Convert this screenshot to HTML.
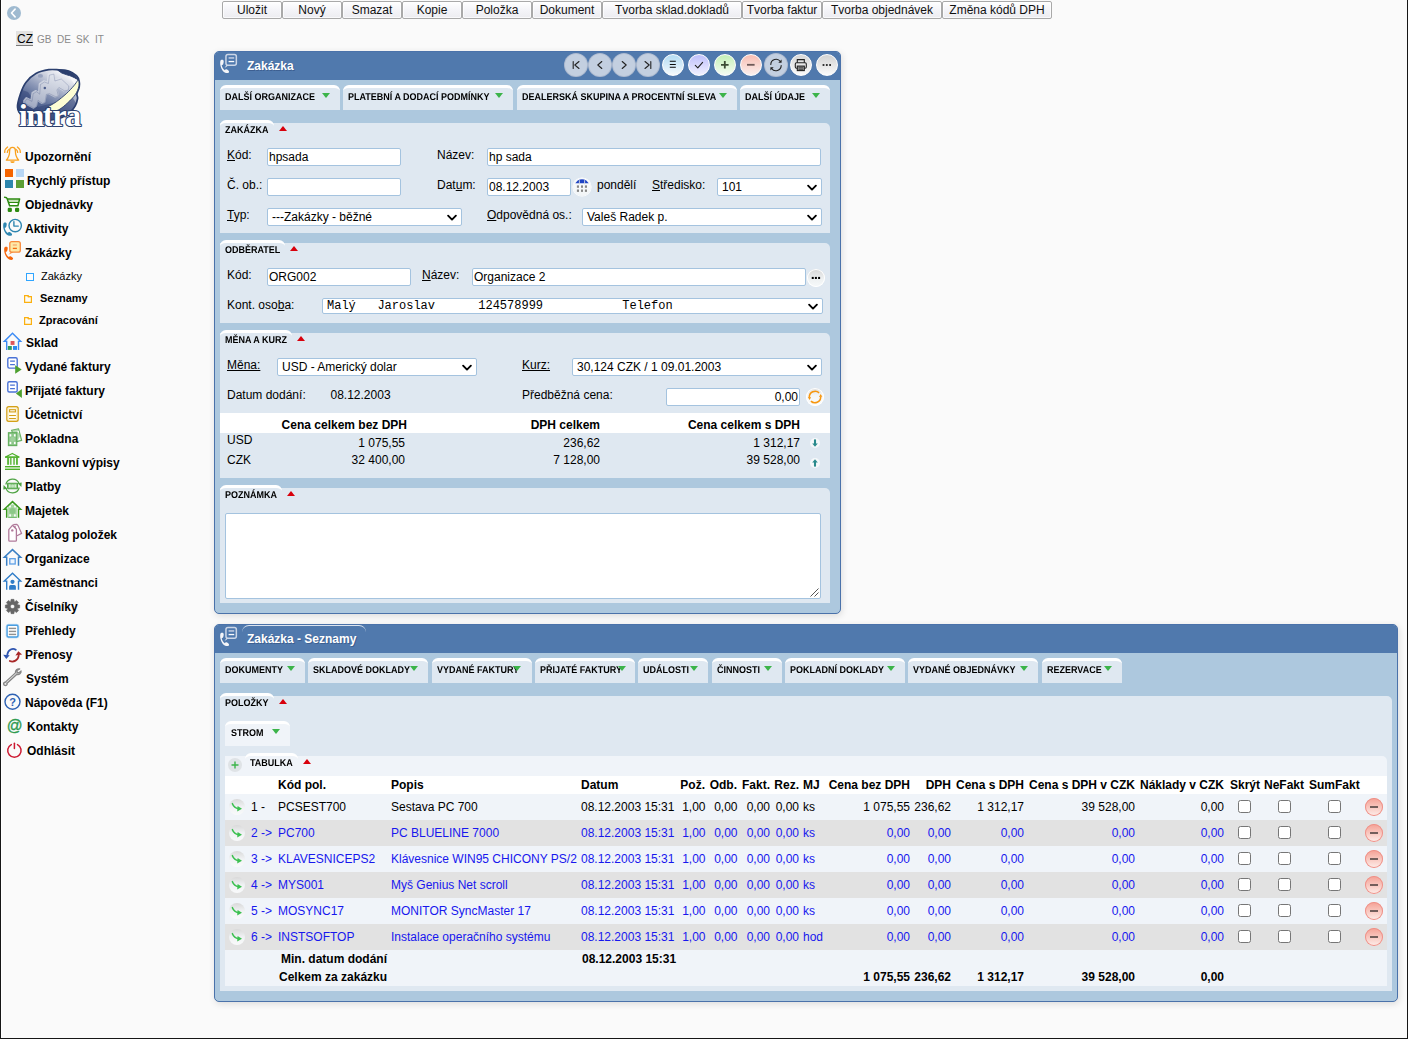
<!DOCTYPE html>
<html><head><meta charset="utf-8"><title>Zakázka</title><style>
*{box-sizing:border-box}
svg{display:block}
html,body{margin:0;padding:0}
body{width:1408px;height:1039px;overflow:hidden;position:relative;background:#fafafa;font:12px "Liberation Sans",sans-serif;color:#000}
.abs{position:absolute}
.t{position:absolute;white-space:pre;line-height:14px;height:14px}
.b{font-weight:bold}
.r{text-align:right}
.u{text-decoration:underline}
.edge{position:absolute;background:#161616}
.tb{position:absolute;top:1px;height:18px;border:1px solid #a9a9a9;border-radius:2px;background:linear-gradient(#ffffff,#f4f4f8 50%,#ececf0);text-align:center;line-height:17px;font-size:12px;color:#111;box-shadow:inset 0 0 0 1px rgba(255,255,255,.7)}
.win{position:absolute;border:1px solid #4a72aa;border-radius:5px;background:#adc8de;box-shadow:1px 2px 7px rgba(0,0,0,.12)}
.hdr{position:absolute;left:0;top:0;right:0;height:28px;background:#5079ad;border-radius:4px 4px 0 0}
.ttl{position:absolute;color:#fff;font-weight:bold;font-size:12px;line-height:14px;white-space:pre;text-shadow:1px 1px 0 #3d5f91}
.tab{position:absolute;height:25px;background:#dfe8f1;border-radius:6px 6px 0 0;border-top:3px solid #fff;font:bold 9.800px "Liberation Sans",sans-serif;white-space:pre;color:#000}
.tab span{position:absolute;top:5px;line-height:10px;text-rendering:geometricPrecision;transform:scaleX(.918);transform-origin:0 100%}
.tab i{position:absolute;top:5px;width:0;height:0;border-left:4px solid transparent;border-right:4px solid transparent;border-top:5px solid #3cb44a}
.sec{position:absolute;background:#dfe8f1;border-radius:0 5px 0 0}
.sec2{background:#f0f4f9}
.lab{position:absolute;background:inherit;border-radius:6px 6px 0 0;border-top:3px solid #fff;height:14px;font:bold 9.800px "Liberation Sans",sans-serif;white-space:pre}
.lab span{position:absolute;left:5px;top:3px;line-height:10px;text-rendering:geometricPrecision;transform:scaleX(.918);transform-origin:0 100%}
.lab i{position:absolute;top:3px;width:0;height:0;border-left:4px solid transparent;border-right:4px solid transparent;border-bottom:5px solid #d8000c}
.inp{position:absolute;background:#fff;border:1px solid #a4c3df;border-radius:2px;font-size:12px;line-height:16px;padding:0 0 0 1px;white-space:pre;overflow:hidden}
.sel{position:absolute;background:#fff;border:1px solid #a4c3df;border-radius:2px;font-size:12px;line-height:16px;padding:0 0 0 4px;white-space:pre;overflow:hidden}
.sel svg{position:absolute;right:3px;top:5px}
.sel.mono svg{top:4px}
.mono{font-family:"Liberation Mono",monospace}
.cb{position:absolute;width:13px;height:13px;border:1px solid #767676;border-radius:2.500px;background:#fff}
.nav{position:absolute;font-weight:bold;font-size:12px;white-space:pre;line-height:14px;height:14px}
.sub{position:absolute;font-size:11px;white-space:pre;line-height:13px;height:13px}
.blue{color:#1717ee}
</style></head><body>
<div class="edge" style="left:0;top:0;width:1px;height:1039px"></div><div class="abs" style="left:1px;top:0;width:1.300px;height:1038px;background:#fff"></div>
<div class="edge" style="left:1407px;top:0;width:1px;height:1039px"></div>
<div class="edge" style="left:0;top:1038px;width:1408px;height:1px"></div>
<div class="abs" style="left:7px;top:6px;width:14px;height:14px;border-radius:50%;background:#9fbad0"><svg width="14" height="14" viewBox="0.500 0.500 14 14"><path d="M8.6 3.6 L5 7.5 L8.6 11.4" fill="none" stroke="#fff" stroke-width="1.6" stroke-linecap="round" stroke-linejoin="round"/></svg></div>
<div class="abs" style="left:16px;top:31px;width:17px;height:15px;background:#e2e2e2;border-bottom:1px solid #7a7a7a"></div>
<div class="t" style="left:17px;top:32px;font-size:12px">CZ</div>
<div class="t" style="left:37px;top:32px;font-size:10px;color:#8a8a8a;line-height:15px">GB</div>
<div class="t" style="left:57px;top:32px;font-size:10px;color:#8a8a8a;line-height:15px">DE</div>
<div class="t" style="left:76px;top:32px;font-size:10px;color:#8a8a8a;line-height:15px">SK</div>
<div class="t" style="left:95px;top:32px;font-size:10px;color:#8a8a8a;line-height:15px">IT</div>
<div class="abs" style="left:8px;top:60px"><svg width="88" height="72" viewBox="0 0 88 72">
<defs>
<linearGradient id="gl" x1="0.75" y1="0.1" x2="0.2" y2="0.95"><stop offset="0" stop-color="#f0f1f6"/><stop offset="0.18" stop-color="#c9cedc"/><stop offset="0.42" stop-color="#8d99b8"/><stop offset="0.68" stop-color="#566894"/><stop offset="1" stop-color="#2f4275"/></linearGradient>
<linearGradient id="sq" x1="0.7" y1="0" x2="0.3" y2="1"><stop offset="0" stop-color="#e3e6ee"/><stop offset="0.5" stop-color="#c3c9d8"/><stop offset="1" stop-color="#a3acc4"/></linearGradient>
<filter id="bl" x="-5%" y="-5%" width="110%" height="110%"><feGaussianBlur stdDeviation=".55"/></filter>
<clipPath id="gc"><path d="M9.5 47.3C9.2 43.7 11.1 37.9 12.5 33.8C13.9 29.6 15.3 25.8 17.9 22.4C20.5 19.0 24.1 15.6 27.9 13.5C31.7 11.4 36.9 10.3 40.8 9.7C44.6 9.1 47.7 9.7 51.0 9.9C54.3 10.1 57.8 10.0 60.7 11.0C63.7 12.0 67.0 14.2 68.7 15.9C70.5 17.6 70.8 19.6 71.2 21.5C71.6 23.4 71.6 24.9 71.2 27.0C70.8 29.1 69.2 31.9 68.9 33.8C68.6 35.7 69.9 36.5 69.6 38.5C69.3 40.5 68.4 43.5 67.2 45.8C66.0 48.0 64.4 50.0 62.2 52.0C60.0 54.0 57.7 56.1 54.0 57.5C50.3 58.9 44.8 60.2 40.0 60.5C35.2 60.8 29.3 60.3 25.0 59.5C20.7 58.7 16.6 57.5 14.0 55.5C11.4 53.5 9.8 50.9 9.5 47.3Z"/></clipPath></defs>
<path d="M9.5 47.3C9.2 43.7 11.1 37.9 12.5 33.8C13.9 29.6 15.3 25.8 17.9 22.4C20.5 19.0 24.1 15.6 27.9 13.5C31.7 11.4 36.9 10.3 40.8 9.7C44.6 9.1 47.7 9.7 51.0 9.9C54.3 10.1 57.8 10.0 60.7 11.0C63.7 12.0 67.0 14.2 68.7 15.9C70.5 17.6 70.8 19.6 71.2 21.5C71.6 23.4 71.6 24.9 71.2 27.0C70.8 29.1 69.2 31.9 68.9 33.8C68.6 35.7 69.9 36.5 69.6 38.5C69.3 40.5 68.4 43.5 67.2 45.8C66.0 48.0 64.4 50.0 62.2 52.0C60.0 54.0 57.7 56.1 54.0 57.5C50.3 58.9 44.8 60.2 40.0 60.5C35.2 60.8 29.3 60.3 25.0 59.5C20.7 58.7 16.6 57.5 14.0 55.5C11.4 53.5 9.8 50.9 9.5 47.3Z" fill="url(#gl)" stroke="#2b3f6e" stroke-width="1.700" stroke-linejoin="round"/>
<g clip-path="url(#gc)">
<path d="M8 36L14 30L20 32L30 47L52 41L62 33L72 50L60 62L8 62Z" fill="#2f4275" opacity=".5"/>
<path d="M9 30C10 42 12 50 18 57L8 58Z" fill="#2b3f6e" opacity=".7"/>
<ellipse cx="32.400" cy="15.900" rx="2.600" ry="1.900" fill="#97a2be"/>
<path d="M16.4 40.8L18.4 38.3L23.4 40.8L24.6 33.1L27.9 31.1L31.1 33.6L31.9 23.9L35.8 21.4L39.8 22.9L40.8 14.5L45.3 13.5L46.3 20.4L52.7 18.4L60.2 25.4L59.7 29.4L56.2 30.4L50.3 26.9L48.3 29.4L49.8 35.3L47.3 36.3L40.8 33.1L37.8 33.8L36.3 41.8L33.8 42.8L29.4 39.8L27.9 45.8L25.4 47.5L16.4 42.8Z" fill="url(#sq)" stroke="url(#sq)" stroke-width="2.400" stroke-linejoin="round" filter="url(#bl)"/>
<path d="M16.4 40.8L18.4 38.3L23.4 40.8L24.6 33.1L27.9 31.1L31.1 33.6L31.9 23.9L35.8 21.4L39.8 22.9L40.8 14.5L45.3 13.5L46.3 20.4L52.7 18.4L60.2 25.4L59.7 29.4L56.2 30.4L50.3 26.9L48.3 29.4L49.8 35.3L47.3 36.3L40.8 33.1L37.8 33.8L36.3 41.8L33.8 42.8L29.4 39.8L27.9 45.8L25.4 47.5L16.4 42.8Z" fill="none" stroke="#3e5080" stroke-width=".45" stroke-linejoin="round" opacity=".55" transform="translate(.6,.6)"/>
<circle cx="36.800" cy="28.100" r="1.250" fill="#4c5d8a"/>
</g>
<path d="M49.800 10.200C54 8.800 66 10.500 70.800 20.600L69.900 20.200C66.500 16.800 61 15.800 53.700 13Z" fill="#2b3f6e" stroke="#2b3f6e" stroke-width=".9" stroke-linejoin="round"/>
<path d="M60.500 15.700L69.300 20L66.300 24Z" fill="#f7f7fa"/>
<path d="M69.9 20.2C69.2 21.1 67.7 23.6 65.7 25.9C63.8 28.2 61.1 31.1 58.2 33.8C55.3 36.4 51.8 39.3 48.3 41.8C44.8 44.2 39.0 47.4 37.1 48.5L41 49.300L41.8 52.2C43.3 51.8 47.8 51.4 50.8 49.8C53.8 48.2 57.0 45.3 59.7 42.8C62.4 40.3 65.4 37.4 67.2 34.8C69.0 32.1 70.1 29.2 70.7 26.9C71.3 24.6 70.9 21.9 70.9 20.9Z" fill="#fdfdd4" stroke="#2b3f6e" stroke-width=".9" stroke-linejoin="round"/>
<text x="10.800" y="66.200" font-family="Liberation Serif" font-weight="bold" font-size="32.500" textLength="62.500" lengthAdjust="spacing" fill="#ffffff" stroke="#2b3f6e" stroke-width="2.200" paint-order="stroke" stroke-linejoin="round">intra</text>
</svg></div>
<div class="nav" style="left:25px;top:150px">Upozornění</div>
<div class="abs" style="left:0;top:144px;width:26px;height:24px"><svg width="26" height="24" viewBox="0 0 26 24" ><g fill="none" stroke="#f9a01b" stroke-width="1.300" stroke-linecap="round" stroke-linejoin="round"><path d="M12.500 3.400C10.600 3.400 9.600 5 9.600 7.200C9.600 11.200 8.600 13.600 6.300 16.100H18.700C16.400 13.600 15.400 11.200 15.400 7.200C15.400 5 14.400 3.400 12.500 3.400Z"/><path d="M7.600 3C5.600 4.300 4.700 6.200 4.700 8.400M9.200 5.300C7.900 6.100 7.400 7.200 7.300 8.400M17.400 3C19.400 4.300 20.300 6.200 20.300 8.400M15.800 5.300C17.100 6.100 17.600 7.200 17.700 8.400"/></g><path d="M10.300 17.200h4.400a2.200 1.900 0 0 1-4.400 0z" fill="#f9a01b"/></svg></div>
<div class="nav" style="left:27px;top:174px">Rychlý přístup</div>
<div class="abs" style="left:0;top:168px;width:26px;height:24px"><svg width="26" height="24" viewBox="0 0 26 24" ><rect x="5" y="1" width="8" height="8" fill="#f56400"/><rect x="16" y="1" width="8" height="8" fill="#b8d6f4"/><rect x="5" y="12" width="8" height="8" fill="#2d86ad"/><rect x="16" y="12" width="8" height="8" fill="#5c9e35"/></svg></div>
<div class="nav" style="left:25px;top:198px">Objednávky</div>
<div class="abs" style="left:0;top:192px;width:26px;height:24px"><svg width="26" height="24" viewBox="0 0 26 24" ><path d="M7.800 7h11.600l-1.600 6.600h-8z" fill="#fff"/><path d="M8.200 7.600h10.800l-.7 2.700h-9.300z" fill="#c5e0b8"/><g fill="none" stroke="#2c8a10" stroke-width="1.500" stroke-linejoin="round" stroke-linecap="round"><path d="M4.600 5.200c1.400 0 2.200.3 2.500 1.300l2.500 7.300h8.300l1.700-6.800h-12"/><path d="M8.500 10.500h10" stroke-width="1.200"/></g><rect x="7.700" y="15.800" width="4.200" height="4.200" rx="1.300" fill="#2c8a10"/><rect x="15" y="15.800" width="4.200" height="4.200" rx="1.300" fill="#2c8a10"/></svg></div>
<div class="nav" style="left:25px;top:222px">Aktivity</div>
<div class="abs" style="left:0;top:216px;width:26px;height:24px"><svg width="26" height="24" viewBox="0 0 26 24" ><g fill="none" stroke="#2e86b0" stroke-width="1.400" stroke-linecap="round" stroke-linejoin="round"><circle cx="15.200" cy="9.600" r="6.200"/><path d="M13.900 5.600V10.100H18.300"/></g><g transform="translate(-1,-0.3)" fill="#2e86b0" stroke="none"><path d="M4.3 8.2 C4.6 6.9 6.2 6.500 7.300 7.200 C8 7.700 7.700 9.200 7.300 10.800 C7.100 11.700 6.300 12.100 5.700 12 C5.900 14.200 7.300 16.200 8.800 17.200 C9.300 16.300 10.200 16.100 11 16.600 C12.300 17.400 13.400 18.200 13 19.200 C12.400 20.300 10.600 20.300 9.200 19.700 C5.800 18.100 3.600 12.500 4.300 8.200Z"/></g></svg></div>
<div class="nav" style="left:25px;top:246px">Zakázky</div>
<div class="abs" style="left:0;top:240px;width:26px;height:24px"><svg width="26" height="24" viewBox="0 0 26 24" ><path d="M11.500 11.500L8.400 14.800L13.500 12.200Z" fill="#f8893a"/><rect x="9.800" y="1.600" width="10.500" height="10.600" rx="2" fill="#fdeaa8" stroke="#f8893a" stroke-width="1.300"/><path d="M12.800 5h4.100" stroke="#f8a870" stroke-width="1.300"/><path d="M12.800 8.400h4.100" stroke="#f56a10" stroke-width="1.300"/><g transform="translate(0,-0.2)" fill="#f5640a" stroke="none"><path d="M4.3 8.2 C4.6 6.9 6.2 6.500 7.300 7.200 C8 7.700 7.700 9.200 7.300 10.800 C7.100 11.700 6.300 12.100 5.700 12 C5.900 14.200 7.300 16.200 8.800 17.200 C9.300 16.300 10.200 16.100 11 16.600 C12.300 17.400 13.400 18.200 13 19.200 C12.400 20.300 10.600 20.300 9.200 19.700 C5.800 18.100 3.600 12.500 4.300 8.200Z"/></g></svg></div>
<div class="nav" style="left:26px;top:336px">Sklad</div>
<div class="abs" style="left:0;top:330px;width:26px;height:24px"><svg width="26" height="24" viewBox="0 0 26 24" ><g fill="none" stroke="#3d8cf5" stroke-width="1.4" stroke-linejoin="miter"><path d="M6.700 19.9 V11.4 H4.300 L12.500 3.3 L20.700 11.4 H18.500 V19.9"/></g><rect x="10.600" y="11" width="3.900" height="3.900" fill="#e0555a"/><rect x="7.900" y="16" width="3.900" height="3.900" fill="#2e9a62"/><rect x="13" y="16" width="4" height="3.900" fill="#2d8cf0"/></svg></div>
<div class="nav" style="left:25px;top:360px">Vydané faktury</div>
<div class="abs" style="left:0;top:354px;width:26px;height:24px"><svg width="26" height="24" viewBox="0 0 26 24" ><rect x="7.800" y="3.8" width="9.400" height="10.300" rx="1.500" fill="#fff" stroke="#4a72d6" stroke-width="1.400"/><path d="M10.100 7.2h4.800M10.100 10.6h4.800" stroke="#4a72d6" stroke-width="1.200"/><path d="M15.200 11.300V19.700L21.700 15.500Z" fill="#4da02f"/></svg></div>
<div class="nav" style="left:25px;top:384px">Přijaté faktury</div>
<div class="abs" style="left:0;top:378px;width:26px;height:24px"><svg width="26" height="24" viewBox="0 0 26 24" ><rect x="7.800" y="3.7" width="9.400" height="10.300" rx="1.500" fill="#fff" stroke="#4a72d6" stroke-width="1.400"/><path d="M10.100 7.1h4.800M10.100 10.6h4.800" stroke="#4a72d6" stroke-width="1.200"/><path d="M21.900 11V19.900L15.900 15.600Z" fill="#4da02f"/></svg></div>
<div class="nav" style="left:25px;top:408px">Účetnictví</div>
<div class="abs" style="left:0;top:402px;width:26px;height:24px"><svg width="26" height="24" viewBox="0 0 26 24" ><rect x="6.900" y="4.700" width="11.200" height="14.600" rx="1.800" fill="#fffdf4" stroke="#d4a017" stroke-width="1.400"/><rect x="8" y="5.800" width="9" height="12.400" rx=".8" fill="none" stroke="#f4e2ac" stroke-width=".9"/><rect x="9.600" y="7.700" width="5.800" height="2.200" fill="#fff" stroke="#d4a017" stroke-width="1.100"/><path d="M9.100 13.500h6.800M9.100 16.500h6.800" stroke="#d4a017" stroke-width="1.200"/></svg></div>
<div class="nav" style="left:25px;top:432px">Pokladna</div>
<div class="abs" style="left:0;top:426px;width:26px;height:24px"><svg width="26" height="24" viewBox="0 0 26 24" ><path d="M11.500 4.200L18.600 2.800L21.700 14.400L16.500 15.700Z" fill="#b5dab2" stroke="#6ab265" stroke-width="1.100" stroke-linejoin="round"/><path d="M17.300 5.200l1.200-.3.700 2.500M19.300 11.300l1 2.200-2 .5" fill="#fff" stroke="none"/><path d="M17.200 5.100l1.300-.3.600 2.300zM19.500 11l1 2.600-2.300.6z" fill="#fff"/><rect x="8.400" y="6.700" width="8.400" height="12.900" fill="#8cc689" stroke="#62ae5c" stroke-width="1.100"/><g fill="#fff"><rect x="9.600" y="8.200" width="1.700" height="2.300"/><rect x="13.900" y="8.200" width="1.700" height="2.300"/><rect x="9.600" y="15.800" width="1.700" height="2.300"/><rect x="13.900" y="15.800" width="1.700" height="2.300"/></g><circle cx="12.600" cy="13.200" r="2.500" fill="#9fd09c"/></svg></div>
<div class="nav" style="left:25px;top:456px">Bankovní výpisy</div>
<div class="abs" style="left:0;top:450px;width:26px;height:24px"><svg width="26" height="24" viewBox="0 0 26 24" ><path d="M5.500 7L12.300 3.400L19 7Z" fill="none" stroke="#4caf28" stroke-width="1.100" stroke-linejoin="round"/><path d="M5 7.200h14.200" stroke="#4caf28" stroke-width="1.200"/><rect x="7.2" y="7.500" width="1.700" height="7.300" fill="#4caf28" opacity="1"/><rect x="9.9" y="7.500" width="1.700" height="7.300" fill="#4caf28" opacity="0.8"/><rect x="13.2" y="7.500" width="1.700" height="7.300" fill="#4caf28" opacity="0.8"/><rect x="16.1" y="7.500" width="1.700" height="7.300" fill="#4caf28" opacity="1"/><rect x="5" y="16" width="15" height="4" fill="#cfe8c4"/><rect x="5" y="16" width="15" height="1.200" fill="#4caf28"/><rect x="5" y="18.800" width="15" height="1.200" fill="#4caf28"/></svg></div>
<div class="nav" style="left:25px;top:480px">Platby</div>
<div class="abs" style="left:0;top:474px;width:26px;height:24px"><svg width="26" height="24" viewBox="0 0 26 24" ><g fill="none" stroke="#4fa344" stroke-width="1.200"><path d="M5.800 10.500A6.900 6.900 0 0 1 19 9.600"/><path d="M19.200 13.500A6.900 6.900 0 0 1 6 14.400"/></g><path d="M17.500 9.200l3.900 3.900.3-4.600z M7.500 14.800l-3.900-3.900-.3 4.600z" fill="#4fa344"/><rect x="7.600" y="9.200" width="9.900" height="5.500" rx=".6" fill="#8cc887" stroke="#4fa344" stroke-width="1.100"/><rect x="9" y="10.500" width="1.600" height="2.900" fill="#d9eed6"/><rect x="14.500" y="10.500" width="1.600" height="2.900" fill="#d9eed6"/><circle cx="12.600" cy="12" r="1.500" fill="#c4e4c0"/></svg></div>
<div class="nav" style="left:25px;top:504px">Majetek</div>
<div class="abs" style="left:0;top:498px;width:26px;height:24px"><svg width="26" height="24" viewBox="0 0 26 24" ><rect x="8.200" y="6.500" width="8.600" height="13" fill="#a4d49f"/><g fill="#fff"><rect x="9.200" y="7.300" width="1.600" height="2.200" transform="rotate(20 10 8.400)"/><rect x="14.200" y="7.300" width="1.600" height="2.200" transform="rotate(-20 15 8.400)"/><rect x="9.300" y="16.300" width="1.600" height="2.300"/><rect x="14.100" y="16.300" width="1.600" height="2.300"/></g><circle cx="12.500" cy="13" r="2.900" fill="#8cc887"/><path d="M8.200 19.400h8.600" stroke="#6db864" stroke-width="1"/><g fill="none" stroke="#3a9a1e" stroke-width="1.5" stroke-linejoin="miter"><path d="M6.700 19.8 V11.3 H4.300 L12.500 3.5999999999999996 L20.700 11.3 H18.500 V19.8"/></g></svg></div>
<div class="nav" style="left:25px;top:528px">Katalog položek</div>
<div class="abs" style="left:0;top:522px;width:26px;height:24px"><svg width="26" height="24" viewBox="0 0 26 24" ><path d="M13.200 2.700L16.600 2.300L18 3.500L21.600 11.400L17 13.800" fill="#fff" stroke="#b07a9a" stroke-width="1.200" stroke-linejoin="round"/><path d="M8.800 18.200V7.700L12.600 3.200L16.400 7.200V18.200Q16.400 19.100 15.500 19.100H9.700Q8.800 19.100 8.800 18.200Z" fill="#fff" stroke="#b07a9a" stroke-width="1.300" stroke-linejoin="round"/><circle cx="12.300" cy="8.400" r="1.200" fill="#b07a9a"/><circle cx="15" cy="4.900" r=".9" fill="#b07a9a"/></svg></div>
<div class="nav" style="left:25px;top:552px">Organizace</div>
<div class="abs" style="left:0;top:546px;width:26px;height:24px"><svg width="26" height="24" viewBox="0 0 26 24" ><g fill="none" stroke="#3a7fc4" stroke-width="1.5" stroke-linejoin="miter"><path d="M6.700 19.8 V11.3 H4.300 L12.500 3.5999999999999996 L20.700 11.3 H18.500 V19.8"/></g><rect x="9.800" y="12.700" width="5.400" height="5.300" fill="#eef5fd" stroke="#5fa0e6" stroke-width="1.300"/></svg></div>
<div class="nav" style="left:24.5px;top:576px">Zaměstnanci</div>
<div class="abs" style="left:0;top:570px;width:26px;height:24px"><svg width="26" height="24" viewBox="0 0 26 24" ><g fill="none" stroke="#2f7cc8" stroke-width="1.4" stroke-linejoin="miter"><path d="M6.700 19.8 V11.1 H4.300 L12.500 3.3 L20.700 11.1 H18.500 V19.8"/></g><circle cx="12.500" cy="11.800" r="2.100" fill="#2f7cc8"/><path d="M9.100 19.800V16.400Q9.100 14.900 10.600 14.900H14.400Q15.900 14.900 15.900 16.400V19.800Z" fill="#2f7cc8"/></svg></div>
<div class="nav" style="left:25px;top:600px">Číselníky</div>
<div class="abs" style="left:0;top:594px;width:26px;height:24px"><svg width="26" height="24" viewBox="0 0 26 24" ><path d="M11.05 5.35L13.95 5.35L14.25 7.39L14.88 7.65L16.53 6.42L18.58 8.47L17.35 10.12L17.61 10.75L19.65 11.05L19.65 13.95L17.61 14.25L17.35 14.88L18.58 16.53L16.53 18.58L14.88 17.35L14.25 17.61L13.95 19.65L11.05 19.65L10.75 17.61L10.12 17.35L8.47 18.58L6.42 16.53L7.65 14.88L7.39 14.25L5.35 13.95L5.35 11.05L7.39 10.75L7.65 10.12L6.42 8.47L8.47 6.42L10.12 7.65L10.75 7.39Z M12.50 10.40a2.10 2.10 0 1 0 .01 0z" fill="#666" fill-rule="evenodd" stroke="#666" stroke-width=".6" stroke-linejoin="round"/></svg></div>
<div class="nav" style="left:25px;top:624px">Přehledy</div>
<div class="abs" style="left:0;top:618px;width:26px;height:24px"><svg width="26" height="24" viewBox="0 0 26 24" ><rect x="7" y="7.100" width="11.100" height="12" rx="1.600" fill="#fff" stroke="#4a9ee0" stroke-width="1.600"/><rect x="6.200" y="6.300" width="12.700" height="13.600" rx="2.200" fill="none" stroke="#9ccbf2" stroke-width=".6"/><path d="M8.900 10.300h7.200M8.900 13.300h7.200M8.900 16.300h7.200" stroke="#7a7a7a" stroke-width="1.300"/><path d="M8.900 11.100h7.200M8.900 14.100h7.200M8.900 17.100h7.200" stroke="#d8d8d8" stroke-width=".6"/></svg></div>
<div class="nav" style="left:25px;top:648px">Přenosy</div>
<div class="abs" style="left:0;top:642px;width:26px;height:24px"><svg width="26" height="24" viewBox="0 0 26 24" ><path d="M15.800 7.700C12.800 5.800 8 7.300 7.300 12.600" fill="none" stroke="#2f55b0" stroke-width="1.800" stroke-linecap="round"/><path d="M3.200 12.700L9.700 13.200L6.300 17.100Z" fill="#2f55b0"/><path d="M9.800 19C13.500 20.600 18.300 18.300 18.700 13.500" fill="none" stroke="#a82828" stroke-width="1.800" stroke-linecap="round"/><path d="M15.400 13.600L22.100 12.500L18.300 9.200Z" fill="#a82828"/></svg></div>
<div class="nav" style="left:26px;top:672px">Systém</div>
<div class="abs" style="left:0;top:666px;width:26px;height:24px"><svg width="26" height="24" viewBox="0 0 26 24" ><path d="M19.700 2.900C17.200 2.400 15 4.300 15.400 6.900L5.300 16.100C4.300 15.900 3.300 16.900 3.600 18.100C3.900 19.500 5.600 20.100 6.700 19.100C7.200 18.600 7.300 17.900 7.100 17.400L16.700 8.500C19.200 9.300 21.400 7.200 21.100 4.900L19 6.700L17.300 6.300L17 4.600Z" fill="#adadad" stroke="#868686" stroke-width="1.200" stroke-linejoin="round"/><circle cx="5.400" cy="17.900" r=".8" fill="#f4f4f4"/><path d="M6.500 16.300L16.400 7.200" stroke="#e4e4e4" stroke-width=".8"/></svg></div>
<div class="nav" style="left:25px;top:696px">Nápověda (F1)</div>
<div class="abs" style="left:0;top:690px;width:26px;height:24px"><svg width="26" height="24" viewBox="0 0 26 24" ><circle cx="12.500" cy="11.800" r="7.500" fill="none" stroke="#2e62b4" stroke-width="1.400"/><text x="12.500" y="15.900" font-family="Liberation Sans" font-weight="bold" font-size="11" text-anchor="middle" fill="#2e62b4">?</text></svg></div>
<div class="nav" style="left:27px;top:720px">Kontakty</div>
<div class="abs" style="left:0;top:714px;width:26px;height:24px"><svg width="26" height="24" viewBox="0 0 26 24" ><text x="14.550" y="16.600" font-family="Liberation Sans" font-size="15.600" text-anchor="middle" fill="#2e9a50" stroke="#2e9a50" stroke-width=".35">@</text></svg></div>
<div class="nav" style="left:27px;top:744px">Odhlásit</div>
<div class="abs" style="left:0;top:738px;width:26px;height:24px"><svg width="26" height="24" viewBox="0 0 26 24" ><g fill="none" stroke="#cc1830" stroke-width="1.500" stroke-linecap="round"><path d="M11.300 6.600a6.700 6.700 0 1 0 6.200 0"/><path d="M14.400 5.300v5.300"/></g></svg></div>
<div class="sub" style="left:41px;top:270px">Zakázky</div>
<div class="sub b" style="left:40px;top:292px">Seznamy</div>
<div class="sub b" style="left:39px;top:314px">Zpracování</div>
<div class="abs" style="left:26px;top:273px;width:8px;height:8px;border:1.200px solid #2fa5ff;background:#fcfcfc"></div>
<div class="abs" style="left:24px;top:295px"><svg width="8" height="8" viewBox="0 0 8 8"><path d="M0.6 7.4V0.6H4.2V1.7H7.4V7.4Z" fill="#fdfbf4" stroke="#fbb010" stroke-width="1.2"/><path d="M3 0.6H4.2V1.7H5.2V3Z" fill="#fbb010"/></svg></div>
<div class="abs" style="left:24px;top:317px"><svg width="8" height="8" viewBox="0 0 8 8"><path d="M0.6 7.4V0.6H4.2V1.7H7.4V7.4Z" fill="#fdfbf4" stroke="#fbb010" stroke-width="1.2"/><path d="M3 0.6H4.2V1.7H5.2V3Z" fill="#fbb010"/></svg></div>
<div class="tb" style="left:222px;width:60px">Uložit</div>
<div class="tb" style="left:282px;width:60px">Nový</div>
<div class="tb" style="left:342px;width:60px">Smazat</div>
<div class="tb" style="left:402px;width:60px">Kopie</div>
<div class="tb" style="left:462px;width:70px">Položka</div>
<div class="tb" style="left:532px;width:70px">Dokument</div>
<div class="tb" style="left:602px;width:140px">Tvorba sklad.dokladů</div>
<div class="tb" style="left:742px;width:80px">Tvorba faktur</div>
<div class="tb" style="left:822px;width:120px">Tvorba objednávek</div>
<div class="tb" style="left:942px;width:110px">Změna kódů DPH</div>
<div class="win" style="left:214px;top:51px;width:627px;height:563px"><div class="hdr"></div></div>
<div class="abs" style="left:215.500px;top:53px"><svg width="26" height="24" viewBox="0 0 26 24" ><path d="M12.800 12L8.600 14.900L10.500 12Z" fill="#e9eef6"/><rect x="9.950" y="1.500" width="10.400" height="10.800" rx="2" fill="#4f79ae" stroke="#cbd6e7" stroke-width="1.500"/><path d="M12.600 4.950h5.600" stroke="#c3cfe2" stroke-width="1.500"/><path d="M12.600 8.550h5.600" stroke="#fbfcfe" stroke-width="1.300"/><g transform="translate(0,0)" fill="#f4f5f8" stroke="none"><path d="M4.3 8.2 C4.6 6.9 6.2 6.500 7.300 7.200 C8 7.700 7.700 9.200 7.300 10.800 C7.100 11.700 6.300 12.100 5.700 12 C5.900 14.200 7.300 16.200 8.800 17.200 C9.300 16.300 10.200 16.100 11 16.600 C12.300 17.400 13.400 18.200 13 19.200 C12.400 20.300 10.600 20.300 9.200 19.700 C5.800 18.100 3.600 12.500 4.300 8.200Z"/></g></svg></div>
<div class="ttl" style="left:247px;top:59px">Zakázka</div>
<div class="abs" style="left:565.0px;top:54.0px;width:22px;height:22px;border-radius:50%;background:#c3cfe0;box-shadow:0 0 0 1px #aebbd0"><svg style="position:absolute;left:0;top:0" width="22" height="22" viewBox="0 0 22 22"><path d="M8.200 7.500v7M14 7.500l-4.200 3.500 4.200 3.500" fill="none" stroke="#222" stroke-width="1.100" stroke-linecap="round" stroke-linejoin="round"/></svg></div><div class="abs" style="left:589.0px;top:54.0px;width:22px;height:22px;border-radius:50%;background:#c3cfe0;box-shadow:0 0 0 1px #aebbd0"><svg style="position:absolute;left:0;top:0" width="22" height="22" viewBox="0 0 22 22"><path d="M12.800 7.500l-4 3.500 4 3.500" fill="none" stroke="#222" stroke-width="1.100" stroke-linecap="round" stroke-linejoin="round"/></svg></div><div class="abs" style="left:613.0px;top:54.0px;width:22px;height:22px;border-radius:50%;background:#c3cfe0;box-shadow:0 0 0 1px #aebbd0"><svg style="position:absolute;left:0;top:0" width="22" height="22" viewBox="0 0 22 22"><path d="M9.200 7.500l4 3.500-4 3.500" fill="none" stroke="#222" stroke-width="1.100" stroke-linecap="round" stroke-linejoin="round"/></svg></div><div class="abs" style="left:637.0px;top:54.0px;width:22px;height:22px;border-radius:50%;background:#c3cfe0;box-shadow:0 0 0 1px #aebbd0"><svg style="position:absolute;left:0;top:0" width="22" height="22" viewBox="0 0 22 22"><path d="M13.800 7.500v7M8 7.500l4.200 3.500-4.200 3.500" fill="none" stroke="#222" stroke-width="1.100" stroke-linecap="round" stroke-linejoin="round"/></svg></div><div class="abs" style="left:662.0px;top:54.0px;width:22px;height:22px;border-radius:50%;background:#fff radial-gradient(circle closest-side,transparent 0,transparent 100%);background:linear-gradient(#b3dbf2,#f6fafd);border:1.200px solid #fff;box-sizing:border-box"><svg style="position:absolute;left:0;top:0" width="22" height="22" viewBox="0 0 22 22"><g transform="translate(-1.200,-1.200)"><path d="M8 7.500h6M8 10.750h6M8 13.500h6" stroke="#0a0a0a" stroke-width="1.100"/></g></svg></div><div class="abs" style="left:688.0px;top:54.0px;width:22px;height:22px;border-radius:50%;background:#fff radial-gradient(circle closest-side,transparent 0,transparent 100%);background:linear-gradient(#bebffb,#f1f1ff);border:1.200px solid #fff;box-sizing:border-box"><svg style="position:absolute;left:0;top:0" width="22" height="22" viewBox="0 0 22 22"><g transform="translate(-1.200,-1.200)"><path d="M7.500 11.500l2.500 2.500 4.800-5.500" fill="none" stroke="#222" stroke-width="1.100" stroke-linecap="round" stroke-linejoin="round"/></g></svg></div><div class="abs" style="left:714.0px;top:54.0px;width:22px;height:22px;border-radius:50%;background:#fff radial-gradient(circle closest-side,transparent 0,transparent 100%);background:linear-gradient(#c4f0b6,#f6fcf3);border:1.200px solid #fff;box-sizing:border-box"><svg style="position:absolute;left:0;top:0" width="22" height="22" viewBox="0 0 22 22"><g transform="translate(-1.200,-1.200)"><path d="M11 7.200v7.600M7.200 11h7.600" stroke="#3c4c34" stroke-width="1.800"/></g></svg></div><div class="abs" style="left:740.0px;top:54.0px;width:22px;height:22px;border-radius:50%;background:#fff radial-gradient(circle closest-side,transparent 0,transparent 100%);background:linear-gradient(#f8beb2,#fbf0ee);border:1.200px solid #fff;box-sizing:border-box"><svg style="position:absolute;left:0;top:0" width="22" height="22" viewBox="0 0 22 22"><g transform="translate(-1.200,-1.200)"><path d="M7.200 11h7.600" stroke="#6e5a58" stroke-width="1.800"/></g></svg></div><div class="abs" style="left:765.0px;top:54.0px;width:22px;height:22px;border-radius:50%;background:#c3cfe0;box-shadow:0 0 0 1px #aebbd0"><svg style="position:absolute;left:0;top:0" width="22" height="22" viewBox="0 0 22 22"><g fill="none" stroke="#222" stroke-width="1.100" stroke-linecap="round" stroke-linejoin="round"><path d="M5.800 10.500a5.300 5.300 0 0 1 9.600-3"/><path d="M16.200 11.500a5.300 5.300 0 0 1-9.600 3"/></g><path d="M16.600 5.400v3.300h-3.300z M5.400 16.600v-3.300h3.300z" fill="#222"/></svg></div><div class="abs" style="left:790.0px;top:54.0px;width:22px;height:22px;border-radius:50%;background:#fff radial-gradient(circle closest-side,transparent 0,transparent 100%);background:linear-gradient(#d6d6d6,#fbfbfb);border:1.200px solid #fff;box-sizing:border-box"><svg style="position:absolute;left:0;top:0" width="22" height="22" viewBox="0 0 22 22"><g transform="translate(-1.200,-1.200)"><g fill="none" stroke="#222" stroke-width="1.100"><path d="M7.500 9V5.800h7V9"/><rect x="5.500" y="9" width="11" height="5.500" rx="1.200"/><rect x="7.500" y="12.300" width="7" height="4.500" fill="#999"/><path d="M8.800 14h4.400M8.800 15.500h4.400" stroke-width=".7"/></g></g></svg></div><div class="abs" style="left:816.0px;top:54.0px;width:22px;height:22px;border-radius:50%;background:#fff radial-gradient(circle closest-side,transparent 0,transparent 100%);background:linear-gradient(#d2d2d2,#fbfbfb);border:1.200px solid #fff;box-sizing:border-box"><svg style="position:absolute;left:0;top:0" width="22" height="22" viewBox="0 0 22 22"><g transform="translate(-1.200,-1.200)"><g fill="#222"><rect x="6.800" y="10.300" width="1.800" height="1.800"/><rect x="10.100" y="10.300" width="1.800" height="1.800"/><rect x="13.400" y="10.300" width="1.800" height="1.800"/></g></g></svg></div>
<div class="tab " style="left:220px;top:85px;width:120px"><span style="left:5px">DALŠÍ ORGANIZACE</span><i style="left:102px"></i></div>
<div class="tab " style="left:343px;top:85px;width:170px"><span style="left:5px">PLATEBNÍ A DODACÍ PODMÍNKY</span><i style="left:152px"></i></div>
<div class="tab " style="left:517px;top:85px;width:220px"><span style="left:5px">DEALERSKÁ SKUPINA A PROCENTNÍ SLEVA</span><i style="left:202px"></i></div>
<div class="tab " style="left:740px;top:85px;width:90px"><span style="left:5px">DALŠÍ ÚDAJE</span><i style="left:72px"></i></div>
<div class="sec " style="left:220px;top:123px;width:610px;height:110px">
<div class="lab" style="left:0px;top:-3px;width:54px"><span>ZAKÁZKA</span><i style="left:59px"></i></div>
</div>
<div class="t " style="left:227px;top:148px;"><span class="u">K</span>ód:</div>
<div class="inp " style="left:267px;top:148px;width:134px;height:18px;">hpsada</div>
<div class="t " style="left:437px;top:148px;">Název:</div>
<div class="inp " style="left:487px;top:148px;width:334px;height:18px;">hp sada</div>
<div class="t " style="left:227px;top:178px;">Č. ob.:</div>
<div class="inp " style="left:267px;top:178px;width:134px;height:18px;"></div>
<div class="t " style="left:437px;top:178px;">Dat<span class="u">u</span>m:</div>
<div class="inp " style="left:487px;top:178px;width:84px;height:18px;">08.12.2003</div>
<div class="abs" style="left:573px;top:178px"><div style="width:18px;height:18px;border-radius:50%;background:linear-gradient(#fbfcfd,#f2f5f7);box-shadow:0 0 0 .6px #fff"><svg width="18" height="18" viewBox="0 0 18 18"><path d="M2.300 5.300L4.700 2.500Q9 -.2 13.300 2.500L15.700 5.300Z" fill="#1f44c4"/><path d="M6.400 2.200V6.400M11.600 2.200V6.400" stroke="#d6d9de" stroke-width=".9"/><g fill="#888"><rect x="3.900" y="7.400" width="2.100" height="2.400"/><rect x="8" y="7.400" width="2" height="2.400"/><rect x="11.900" y="7.400" width="2.100" height="2.400"/><rect x="3.900" y="11.500" width="2.100" height="2.400"/><rect x="8" y="11.500" width="2" height="2.400"/><rect x="11.900" y="11.500" width="2.100" height="2.400"/></g></svg></div></div>
<div class="t " style="left:597px;top:178px;">pondělí</div>
<div class="t " style="left:652px;top:178px;"><span class="u">S</span>tředisko:</div>
<div class="sel " style="left:717px;top:178px;width:105px;height:18px;">101<svg width="12" height="8" viewBox="0 0 12 8"><path d="M2.100 1.700L6 5.600L9.900 1.700" fill="none" stroke="#000" stroke-width="1.900" stroke-linecap="round" stroke-linejoin="round"/></svg></div>
<div class="t " style="left:227px;top:208px;"><span class="u">T</span>yp:</div>
<div class="sel " style="left:267px;top:208px;width:195px;height:18px;">---Zakázky - běžné<svg width="12" height="8" viewBox="0 0 12 8"><path d="M2.100 1.700L6 5.600L9.900 1.700" fill="none" stroke="#000" stroke-width="1.900" stroke-linecap="round" stroke-linejoin="round"/></svg></div>
<div class="t " style="left:487px;top:208px;"><span class="u">O</span>dpovědná os.:</div>
<div class="sel " style="left:582px;top:208px;width:240px;height:18px;">Valeš Radek p.<svg width="12" height="8" viewBox="0 0 12 8"><path d="M2.100 1.700L6 5.600L9.900 1.700" fill="none" stroke="#000" stroke-width="1.900" stroke-linecap="round" stroke-linejoin="round"/></svg></div>
<div class="sec " style="left:220px;top:243px;width:610px;height:80px">
<div class="lab" style="left:0px;top:-3px;width:65px"><span>ODBĚRATEL</span><i style="left:70px"></i></div>
</div>
<div class="t " style="left:227px;top:268px;">Kód:</div>
<div class="inp " style="left:267px;top:268px;width:144px;height:18px;">ORG002</div>
<div class="t " style="left:422px;top:268px;"><span class="u">N</span>ázev:</div>
<div class="inp " style="left:472px;top:268px;width:334px;height:18px;">Organizace 2</div>
<div class="abs" style="left:807px;top:269px"><div style="width:18px;height:18px;border-radius:50%;background:linear-gradient(#d6d6d6,#eef1f2 55%,#f6f9fa);box-shadow:inset 0 0 0 1px #fff"><svg width="18" height="18" viewBox="0 0 18 18"><g fill="#000"><rect x="4.750" y="7.900" width="2" height="2.100"/><rect x="7.900" y="7.900" width="2" height="2.100"/><rect x="11.100" y="7.900" width="2" height="2.100"/></g></svg></div></div>
<div class="t " style="left:227px;top:298px;">Kont. oso<span class="u">b</span>a:</div>
<div class="sel mono" style="left:322px;top:298px;width:501px;height:16px;line-height:14px;padding-left:4px">Malý   Jaroslav      124578999           Telefon<svg width="12" height="8" viewBox="0 0 12 8"><path d="M2.100 1.700L6 5.600L9.900 1.700" fill="none" stroke="#000" stroke-width="1.900" stroke-linecap="round" stroke-linejoin="round"/></svg></div>
<div class="sec " style="left:220px;top:333px;width:610px;height:145px">
<div class="lab" style="left:0px;top:-3px;width:72px"><span>MĚNA A KURZ</span><i style="left:77px"></i></div>
</div>
<div class="t " style="left:227px;top:358px;"><span class="u">Měna:</span></div>
<div class="sel " style="left:277px;top:358px;width:200px;height:18px;">USD - Americký dolar<svg width="12" height="8" viewBox="0 0 12 8"><path d="M2.100 1.700L6 5.600L9.900 1.700" fill="none" stroke="#000" stroke-width="1.900" stroke-linecap="round" stroke-linejoin="round"/></svg></div>
<div class="t " style="left:522px;top:358px;"><span class="u">Kurz:</span></div>
<div class="sel " style="left:572px;top:358px;width:250px;height:18px;">30,124 CZK / 1 09.01.2003<svg width="12" height="8" viewBox="0 0 12 8"><path d="M2.100 1.700L6 5.600L9.900 1.700" fill="none" stroke="#000" stroke-width="1.900" stroke-linecap="round" stroke-linejoin="round"/></svg></div>
<div class="t " style="left:227px;top:388px;">Datum dodání:</div>
<div class="t " style="left:330.5px;top:388px;">08.12.2003</div>
<div class="t " style="left:522px;top:388px;">Předběžná cena:</div>
<div class="inp " style="left:666px;top:388px;width:134px;height:18px;text-align:right;padding-right:1px">0,00</div>
<div class="abs" style="left:806px;top:388px"><div style="width:18px;height:18px;border-radius:50%;background:linear-gradient(#dedede,#f4f6f7 40%,#fbfcfc);box-shadow:inset 0 0 0 1px #fff"><svg width="18" height="18" viewBox="0 0 18 18"><g fill="none" stroke="#f7960e" stroke-width="1.500"><path d="M13.100 4.900A5.800 5.800 0 0 0 3.300 9.300"/><path d="M4.900 13.100A5.800 5.800 0 0 0 14.700 8.900"/></g><path d="M1.900 9.100L5.100 9.300L3.500 12.100Z M13 9L16.300 8.700L14.650 5.900Z" fill="#f7960e"/></svg></div></div>
<div class="abs" style="left:220px;top:413px;width:610px;height:20px;background:#fff"></div>
<div class="t r b" style="left:207px;width:200px;top:418px;">Cena celkem bez DPH</div>
<div class="t r b" style="left:400px;width:200px;top:418px;">DPH celkem</div>
<div class="t r b" style="left:600px;width:200px;top:418px;">Cena celkem s DPH</div>
<div class="t " style="left:227px;top:433px;">USD</div>
<div class="t r " style="left:205px;width:200px;top:436px;">1 075,55</div>
<div class="t r " style="left:400px;width:200px;top:436px;">236,62</div>
<div class="t r " style="left:600px;width:200px;top:436px;">1 312,17</div>
<div class="t " style="left:227px;top:453px;">CZK</div>
<div class="t r " style="left:205px;width:200px;top:453px;">32 400,00</div>
<div class="t r " style="left:400px;width:200px;top:453px;">7 128,00</div>
<div class="t r " style="left:600px;width:200px;top:453px;">39 528,00</div>
<div class="abs" style="left:810px;top:438px"><div style="width:10px;height:10px;border-radius:50%;background:#f6f8fa"><svg width="10" height="10" viewBox="0 0 10 10"><path d="M5 1.400V6.500" stroke="#2a8a8c" stroke-width="2.100" fill="none"/><path d="M2.200 5.500L5 8.700L7.800 5.500Z" fill="#2a8a8c"/></svg></div></div>
<div class="abs" style="left:810px;top:458px"><div style="width:10px;height:10px;border-radius:50%;background:#f6f8fa"><svg width="10" height="10" viewBox="0 0 10 10"><path d="M5 8.600V3.500" stroke="#2a8a8c" stroke-width="2.100" fill="none"/><path d="M2.200 4.500L5 1.300L7.800 4.500Z" fill="#2a8a8c"/></svg></div></div>
<div class="sec " style="left:220px;top:488px;width:610px;height:115px">
<div class="lab" style="left:0px;top:-3px;width:62px"><span>POZNÁMKA</span><i style="left:67px"></i></div>
</div>
<div class="abs" style="left:225px;top:513px;width:596px;height:86px;background:#fff;border:1px solid #a4c3df;border-radius:2px"><svg class="abs" style="right:1px;bottom:1px" width="9" height="9"><path d="M8.5 0.5L0.5 8.5M8.5 4.5L4.5 8.5" stroke="#555" stroke-width="1"/></svg></div>
<div class="win" style="left:214px;top:624px;width:1184px;height:378px"><div class="hdr"></div></div>
<div class="abs" style="left:242px;top:625px;width:124px;height:12px;border-top:1.500px solid rgba(255,255,255,.8);border-radius:7px 7px 0 0"></div>
<div class="abs" style="left:215.500px;top:625.600px"><svg width="26" height="24" viewBox="0 0 26 24" ><path d="M12.800 12L8.600 14.900L10.500 12Z" fill="#e9eef6"/><rect x="9.950" y="1.500" width="10.400" height="10.800" rx="2" fill="#4f79ae" stroke="#cbd6e7" stroke-width="1.500"/><path d="M12.600 4.950h5.600" stroke="#c3cfe2" stroke-width="1.500"/><path d="M12.600 8.550h5.600" stroke="#fbfcfe" stroke-width="1.300"/><g transform="translate(0,0)" fill="#f4f5f8" stroke="none"><path d="M4.3 8.2 C4.6 6.9 6.2 6.500 7.300 7.200 C8 7.700 7.700 9.200 7.300 10.800 C7.100 11.700 6.300 12.100 5.700 12 C5.900 14.200 7.300 16.200 8.800 17.200 C9.300 16.300 10.200 16.100 11 16.600 C12.300 17.400 13.400 18.200 13 19.200 C12.400 20.300 10.600 20.300 9.200 19.700 C5.800 18.100 3.600 12.500 4.300 8.200Z"/></g></svg></div>
<div class="ttl" style="left:247px;top:632px">Zakázka - Seznamy</div>
<div class="tab " style="left:220px;top:658px;width:85px"><span style="left:5px">DOKUMENTY</span><i style="left:66.5px"></i></div>
<div class="tab " style="left:308px;top:658px;width:120px"><span style="left:5px">SKLADOVÉ DOKLADY</span><i style="left:102px"></i></div>
<div class="tab " style="left:432px;top:658px;width:100px"><span style="left:5px">VYDANÉ FAKTURY</span><i style="left:81px"></i></div>
<div class="tab " style="left:535px;top:658px;width:100px"><span style="left:5px">PŘIJATÉ FAKTURY</span><i style="left:83px"></i></div>
<div class="tab " style="left:638px;top:658px;width:70px"><span style="left:5px">UDÁLOSTI</span><i style="left:52px"></i></div>
<div class="tab " style="left:712px;top:658px;width:70px"><span style="left:5px">ČINNOSTI</span><i style="left:52px"></i></div>
<div class="tab " style="left:785px;top:658px;width:120px"><span style="left:5px">POKLADNÍ DOKLADY</span><i style="left:102px"></i></div>
<div class="tab " style="left:908px;top:658px;width:130px"><span style="left:5px">VYDANÉ OBJEDNÁVKY</span><i style="left:112px"></i></div>
<div class="tab " style="left:1042px;top:658px;width:80px"><span style="left:5px">REZERVACE</span><i style="left:62px"></i></div>
<div class="sec " style="left:220px;top:696px;width:1172px;height:295px">
<div class="lab" style="left:0px;top:-3px;width:54px"><span>POLOŽKY</span><i style="left:59px"></i></div>
</div>
<div class="tab" style="left:225px;top:721px;width:65px;background:#f0f4f9"><span style="left:6px">STROM</span><i style="left:47px"></i></div>
<div class="sec sec2" style="left:225px;top:756px;width:1162px;height:230px">
<div class="lab" style="left:20px;top:-3px;width:53px"><span>TABULKA</span><i style="left:58px"></i></div>
</div>
<div class="abs" style="left:228px;top:758px;width:14px;height:14px;border-radius:50%;background:#dfe3e6"><svg width="14" height="14"><path d="M7 3.5V10.5M3.5 7H10.5" stroke="#3db54a" stroke-width="1.4"/></svg></div>
<div class="abs" style="left:225px;top:776px;width:1162px;height:18px;background:#fff"></div>
<div class="t b" style="left:278px;top:778px;">Kód pol.</div>
<div class="t b" style="left:391px;top:778px;">Popis</div>
<div class="t b" style="left:581px;top:778px;">Datum</div>
<div class="t r b" style="left:505px;width:200px;top:778px;">Pož.</div>
<div class="t r b" style="left:537px;width:200px;top:778px;">Odb.</div>
<div class="t r b" style="left:570px;width:200px;top:778px;">Fakt.</div>
<div class="t r b" style="left:599px;width:200px;top:778px;">Rez.</div>
<div class="t b" style="left:803px;top:778px;">MJ</div>
<div class="t r b" style="left:710px;width:200px;top:778px;">Cena bez DPH</div>
<div class="t r b" style="left:751px;width:200px;top:778px;">DPH</div>
<div class="t r b" style="left:824px;width:200px;top:778px;">Cena s DPH</div>
<div class="t r b" style="left:935px;width:200px;top:778px;">Cena s DPH v CZK</div>
<div class="t r b" style="left:1024px;width:200px;top:778px;">Náklady v CZK</div>
<div class="t b" style="left:1230px;top:778px;">Skrýt</div>
<div class="t b" style="left:1264px;top:778px;">NeFakt</div>
<div class="t b" style="left:1309px;top:778px;">SumFakt</div>
<div class="abs" style="left:229px;top:799px"><div style="width:16px;height:16px;border-radius:50%;background:linear-gradient(#d9d9d9,#f0f2f4 50%,#f9fafb)"><svg width="16" height="16" viewBox="0 0 16 16"><path d="M3.400 4.700C4.600 7.600 6.500 9.200 9.500 9.600" fill="none" stroke="#3cc050" stroke-width="1.600" stroke-linecap="round"/><path d="M13 9.800L8.200 12.400L8.600 7Z" fill="#3cc050"/></svg></div></div>
<div class="t " style="left:251px;top:800px;">1 -</div>
<div class="t " style="left:278px;top:800px;">PCSEST700</div>
<div class="t " style="left:391px;top:800px;">Sestava PC 700</div>
<div class="t " style="left:581px;top:800px;">08.12.2003 15:31</div>
<div class="t r " style="left:505.5px;width:200px;top:800px;">1,00</div>
<div class="t r " style="left:537.5px;width:200px;top:800px;">0,00</div>
<div class="t r " style="left:570px;width:200px;top:800px;">0,00</div>
<div class="t r " style="left:599px;width:200px;top:800px;">0,00</div>
<div class="t " style="left:803px;top:800px;">ks</div>
<div class="t r " style="left:710px;width:200px;top:800px;">1 075,55</div>
<div class="t r " style="left:751px;width:200px;top:800px;">236,62</div>
<div class="t r " style="left:824px;width:200px;top:800px;">1 312,17</div>
<div class="t r " style="left:935px;width:200px;top:800px;">39 528,00</div>
<div class="t r " style="left:1024px;width:200px;top:800px;">0,00</div>
<div class="cb" style="left:1238px;top:800px"></div>
<div class="cb" style="left:1278px;top:800px"></div>
<div class="cb" style="left:1328px;top:800px"></div>
<div class="abs" style="left:1365px;top:798px"><div style="width:18px;height:18px;border-radius:50%;background:linear-gradient(#f4a094,#fdeeea);box-shadow:inset 0 0 0 1px #ee9088"><svg width="18" height="18"><path d="M5 9h8" stroke="#5c4c4a" stroke-width="1.700"/></svg></div></div>
<div class="abs" style="left:225px;top:820px;width:1162px;height:26px;background:#e2e2e2"></div>
<div class="abs" style="left:229px;top:825px"><div style="width:16px;height:16px;border-radius:50%;background:linear-gradient(#d9d9d9,#f0f2f4 50%,#f9fafb)"><svg width="16" height="16" viewBox="0 0 16 16"><path d="M3.400 4.700C4.600 7.600 6.500 9.200 9.500 9.600" fill="none" stroke="#3cc050" stroke-width="1.600" stroke-linecap="round"/><path d="M13 9.800L8.200 12.400L8.600 7Z" fill="#3cc050"/></svg></div></div>
<div class="t blue" style="left:251px;top:826px;">2 -&gt;</div>
<div class="t blue" style="left:278px;top:826px;">PC700</div>
<div class="t blue" style="left:391px;top:826px;">PC BLUELINE 7000</div>
<div class="t blue" style="left:581px;top:826px;">08.12.2003 15:31</div>
<div class="t r blue" style="left:505.5px;width:200px;top:826px;">1,00</div>
<div class="t r blue" style="left:537.5px;width:200px;top:826px;">0,00</div>
<div class="t r blue" style="left:570px;width:200px;top:826px;">0,00</div>
<div class="t r blue" style="left:599px;width:200px;top:826px;">0,00</div>
<div class="t blue" style="left:803px;top:826px;">ks</div>
<div class="t r blue" style="left:710px;width:200px;top:826px;">0,00</div>
<div class="t r blue" style="left:751px;width:200px;top:826px;">0,00</div>
<div class="t r blue" style="left:824px;width:200px;top:826px;">0,00</div>
<div class="t r blue" style="left:935px;width:200px;top:826px;">0,00</div>
<div class="t r blue" style="left:1024px;width:200px;top:826px;">0,00</div>
<div class="cb" style="left:1238px;top:826px"></div>
<div class="cb" style="left:1278px;top:826px"></div>
<div class="cb" style="left:1328px;top:826px"></div>
<div class="abs" style="left:1365px;top:824px"><div style="width:18px;height:18px;border-radius:50%;background:linear-gradient(#f4a094,#fdeeea);box-shadow:inset 0 0 0 1px #ee9088"><svg width="18" height="18"><path d="M5 9h8" stroke="#5c4c4a" stroke-width="1.700"/></svg></div></div>
<div class="abs" style="left:229px;top:851px"><div style="width:16px;height:16px;border-radius:50%;background:linear-gradient(#d9d9d9,#f0f2f4 50%,#f9fafb)"><svg width="16" height="16" viewBox="0 0 16 16"><path d="M3.400 4.700C4.600 7.600 6.500 9.200 9.500 9.600" fill="none" stroke="#3cc050" stroke-width="1.600" stroke-linecap="round"/><path d="M13 9.800L8.200 12.400L8.600 7Z" fill="#3cc050"/></svg></div></div>
<div class="t blue" style="left:251px;top:852px;">3 -&gt;</div>
<div class="t blue" style="left:278px;top:852px;">KLAVESNICEPS2</div>
<div class="t blue" style="left:391px;top:852px;">Klávesnice WIN95 CHICONY PS/2</div>
<div class="t blue" style="left:581px;top:852px;">08.12.2003 15:31</div>
<div class="t r blue" style="left:505.5px;width:200px;top:852px;">1,00</div>
<div class="t r blue" style="left:537.5px;width:200px;top:852px;">0,00</div>
<div class="t r blue" style="left:570px;width:200px;top:852px;">0,00</div>
<div class="t r blue" style="left:599px;width:200px;top:852px;">0,00</div>
<div class="t blue" style="left:803px;top:852px;">ks</div>
<div class="t r blue" style="left:710px;width:200px;top:852px;">0,00</div>
<div class="t r blue" style="left:751px;width:200px;top:852px;">0,00</div>
<div class="t r blue" style="left:824px;width:200px;top:852px;">0,00</div>
<div class="t r blue" style="left:935px;width:200px;top:852px;">0,00</div>
<div class="t r blue" style="left:1024px;width:200px;top:852px;">0,00</div>
<div class="cb" style="left:1238px;top:852px"></div>
<div class="cb" style="left:1278px;top:852px"></div>
<div class="cb" style="left:1328px;top:852px"></div>
<div class="abs" style="left:1365px;top:850px"><div style="width:18px;height:18px;border-radius:50%;background:linear-gradient(#f4a094,#fdeeea);box-shadow:inset 0 0 0 1px #ee9088"><svg width="18" height="18"><path d="M5 9h8" stroke="#5c4c4a" stroke-width="1.700"/></svg></div></div>
<div class="abs" style="left:225px;top:872px;width:1162px;height:26px;background:#e2e2e2"></div>
<div class="abs" style="left:229px;top:877px"><div style="width:16px;height:16px;border-radius:50%;background:linear-gradient(#d9d9d9,#f0f2f4 50%,#f9fafb)"><svg width="16" height="16" viewBox="0 0 16 16"><path d="M3.400 4.700C4.600 7.600 6.500 9.200 9.500 9.600" fill="none" stroke="#3cc050" stroke-width="1.600" stroke-linecap="round"/><path d="M13 9.800L8.200 12.400L8.600 7Z" fill="#3cc050"/></svg></div></div>
<div class="t blue" style="left:251px;top:878px;">4 -&gt;</div>
<div class="t blue" style="left:278px;top:878px;">MYS001</div>
<div class="t blue" style="left:391px;top:878px;">Myš Genius Net scroll</div>
<div class="t blue" style="left:581px;top:878px;">08.12.2003 15:31</div>
<div class="t r blue" style="left:505.5px;width:200px;top:878px;">1,00</div>
<div class="t r blue" style="left:537.5px;width:200px;top:878px;">0,00</div>
<div class="t r blue" style="left:570px;width:200px;top:878px;">0,00</div>
<div class="t r blue" style="left:599px;width:200px;top:878px;">0,00</div>
<div class="t blue" style="left:803px;top:878px;">ks</div>
<div class="t r blue" style="left:710px;width:200px;top:878px;">0,00</div>
<div class="t r blue" style="left:751px;width:200px;top:878px;">0,00</div>
<div class="t r blue" style="left:824px;width:200px;top:878px;">0,00</div>
<div class="t r blue" style="left:935px;width:200px;top:878px;">0,00</div>
<div class="t r blue" style="left:1024px;width:200px;top:878px;">0,00</div>
<div class="cb" style="left:1238px;top:878px"></div>
<div class="cb" style="left:1278px;top:878px"></div>
<div class="cb" style="left:1328px;top:878px"></div>
<div class="abs" style="left:1365px;top:876px"><div style="width:18px;height:18px;border-radius:50%;background:linear-gradient(#f4a094,#fdeeea);box-shadow:inset 0 0 0 1px #ee9088"><svg width="18" height="18"><path d="M5 9h8" stroke="#5c4c4a" stroke-width="1.700"/></svg></div></div>
<div class="abs" style="left:229px;top:903px"><div style="width:16px;height:16px;border-radius:50%;background:linear-gradient(#d9d9d9,#f0f2f4 50%,#f9fafb)"><svg width="16" height="16" viewBox="0 0 16 16"><path d="M3.400 4.700C4.600 7.600 6.500 9.200 9.500 9.600" fill="none" stroke="#3cc050" stroke-width="1.600" stroke-linecap="round"/><path d="M13 9.800L8.200 12.400L8.600 7Z" fill="#3cc050"/></svg></div></div>
<div class="t blue" style="left:251px;top:904px;">5 -&gt;</div>
<div class="t blue" style="left:278px;top:904px;">MOSYNC17</div>
<div class="t blue" style="left:391px;top:904px;">MONITOR SyncMaster 17</div>
<div class="t blue" style="left:581px;top:904px;">08.12.2003 15:31</div>
<div class="t r blue" style="left:505.5px;width:200px;top:904px;">1,00</div>
<div class="t r blue" style="left:537.5px;width:200px;top:904px;">0,00</div>
<div class="t r blue" style="left:570px;width:200px;top:904px;">0,00</div>
<div class="t r blue" style="left:599px;width:200px;top:904px;">0,00</div>
<div class="t blue" style="left:803px;top:904px;">ks</div>
<div class="t r blue" style="left:710px;width:200px;top:904px;">0,00</div>
<div class="t r blue" style="left:751px;width:200px;top:904px;">0,00</div>
<div class="t r blue" style="left:824px;width:200px;top:904px;">0,00</div>
<div class="t r blue" style="left:935px;width:200px;top:904px;">0,00</div>
<div class="t r blue" style="left:1024px;width:200px;top:904px;">0,00</div>
<div class="cb" style="left:1238px;top:904px"></div>
<div class="cb" style="left:1278px;top:904px"></div>
<div class="cb" style="left:1328px;top:904px"></div>
<div class="abs" style="left:1365px;top:902px"><div style="width:18px;height:18px;border-radius:50%;background:linear-gradient(#f4a094,#fdeeea);box-shadow:inset 0 0 0 1px #ee9088"><svg width="18" height="18"><path d="M5 9h8" stroke="#5c4c4a" stroke-width="1.700"/></svg></div></div>
<div class="abs" style="left:225px;top:924px;width:1162px;height:26px;background:#e2e2e2"></div>
<div class="abs" style="left:229px;top:929px"><div style="width:16px;height:16px;border-radius:50%;background:linear-gradient(#d9d9d9,#f0f2f4 50%,#f9fafb)"><svg width="16" height="16" viewBox="0 0 16 16"><path d="M3.400 4.700C4.600 7.600 6.500 9.200 9.500 9.600" fill="none" stroke="#3cc050" stroke-width="1.600" stroke-linecap="round"/><path d="M13 9.800L8.200 12.400L8.600 7Z" fill="#3cc050"/></svg></div></div>
<div class="t blue" style="left:251px;top:930px;">6 -&gt;</div>
<div class="t blue" style="left:278px;top:930px;">INSTSOFTOP</div>
<div class="t blue" style="left:391px;top:930px;">Instalace operačního systému</div>
<div class="t blue" style="left:581px;top:930px;">08.12.2003 15:31</div>
<div class="t r blue" style="left:505.5px;width:200px;top:930px;">1,00</div>
<div class="t r blue" style="left:537.5px;width:200px;top:930px;">0,00</div>
<div class="t r blue" style="left:570px;width:200px;top:930px;">0,00</div>
<div class="t r blue" style="left:599px;width:200px;top:930px;">0,00</div>
<div class="t blue" style="left:803px;top:930px;">hod</div>
<div class="t r blue" style="left:710px;width:200px;top:930px;">0,00</div>
<div class="t r blue" style="left:751px;width:200px;top:930px;">0,00</div>
<div class="t r blue" style="left:824px;width:200px;top:930px;">0,00</div>
<div class="t r blue" style="left:935px;width:200px;top:930px;">0,00</div>
<div class="t r blue" style="left:1024px;width:200px;top:930px;">0,00</div>
<div class="cb" style="left:1238px;top:930px"></div>
<div class="cb" style="left:1278px;top:930px"></div>
<div class="cb" style="left:1328px;top:930px"></div>
<div class="abs" style="left:1365px;top:928px"><div style="width:18px;height:18px;border-radius:50%;background:linear-gradient(#f4a094,#fdeeea);box-shadow:inset 0 0 0 1px #ee9088"><svg width="18" height="18"><path d="M5 9h8" stroke="#5c4c4a" stroke-width="1.700"/></svg></div></div>
<div class="t b" style="left:281px;top:952px;">Min. datum dodání</div>
<div class="t b" style="left:582px;top:952px;">08.12.2003 15:31</div>
<div class="t b" style="left:279px;top:970px;">Celkem za zakázku</div>
<div class="t r b" style="left:710px;width:200px;top:970px;">1 075,55</div>
<div class="t r b" style="left:751px;width:200px;top:970px;">236,62</div>
<div class="t r b" style="left:824px;width:200px;top:970px;">1 312,17</div>
<div class="t r b" style="left:935px;width:200px;top:970px;">39 528,00</div>
<div class="t r b" style="left:1024px;width:200px;top:970px;">0,00</div>
</body></html>
